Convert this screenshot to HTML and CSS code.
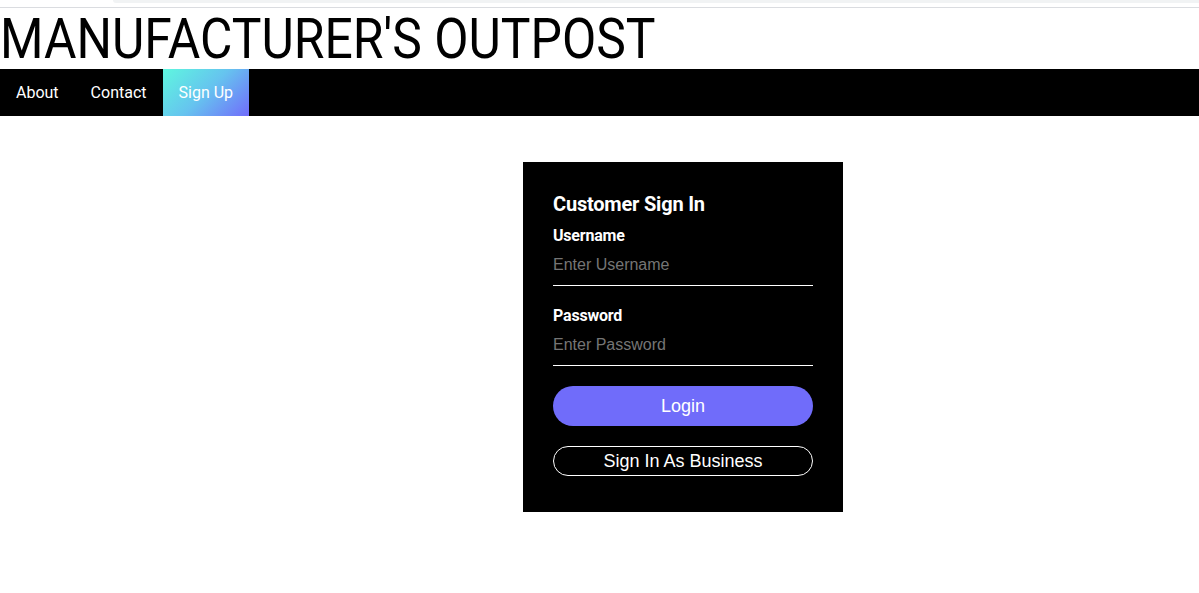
FILE: index.html
```html
<!DOCTYPE html>
<html lang="en">
<head>
<meta charset="utf-8">
<title>Manufacturer's Outpost</title>
<link rel="stylesheet" href="styles.css">
</head>
<body>
<div class="chrome"><div class="chrome-bar"></div></div>
<h1 class="site-title">MANUFACTURER'S OUTPOST</h1>
<nav class="nav">
  <a class="nav-link" href="#">About</a>
  <a class="nav-link" href="#">Contact</a>
  <a class="nav-link nav-link-active" href="#">Sign Up</a>
</nav>
<main class="main">
  <form class="card">
    <h2 class="card-title">Customer Sign In</h2>
    <label class="field-label" for="username">Username</label>
    <input class="field-input" id="username" type="text" placeholder="Enter Username">
    <label class="field-label field-label-gap" for="password">Password</label>
    <input class="field-input" id="password" type="password" placeholder="Enter Password">
    <button class="btn btn-primary" type="button">Login</button>
    <button class="btn btn-outline" type="button">Sign In As Business</button>
  </form>
</main>
</body>
</html>
```

FILE: styles.css
```css
html, body {
  margin: 0;
  padding: 0;
  background: #ffffff;
}

body {
  font-family: Roboto, "Liberation Sans", Arial, sans-serif;
  color: #000;
}

.chrome {
  height: 7px;
  border-bottom: 1px solid #dadce0;
  margin-bottom: 1px;
}

.chrome-bar {
  margin-left: 113px;
  height: 3px;
  background: #f1f3f4;
  border-bottom-left-radius: 6px;
}

.site-title {
  margin: 0;
  font-family: Roboto, sans-serif;
  font-weight: 400;
  font-size: 56px;
  line-height: 60px;
  white-space: nowrap;
  transform: scaleX(0.89);
  transform-origin: left center;
}

.nav {
  display: flex;
  background: #000;
  height: 47px;
}

.nav-link {
  display: block;
  padding: 0 16px;
  line-height: 47px;
  font-size: 16px;
  color: #fff;
  text-decoration: none;
}

.nav-link-active {
  background: linear-gradient(135deg, #5ef7df 0%, #66c3ef 50%, #716cfb 100%);
}

.main {
  display: flex;
  padding: 46px 0 0 523px;
}

.card {
  display: flex;
  flex-direction: column;
  width: 260px;
  padding: 30px 30px 36px;
  background: #000;
  color: #fff;
}

.card-title {
  margin: 0;
  font-size: 20px;
  line-height: 24px;
  font-weight: 700;
  letter-spacing: -0.2px;
}

.field-label {
  display: block;
  margin-top: 10px;
  font-size: 16px;
  line-height: 19px;
  font-weight: 700;
  letter-spacing: -0.2px;
}

.field-label-gap {
  margin-top: 20px;
}

.field-input {
  display: block;
  box-sizing: content-box;
  width: 260px;
  height: 40px;
  padding: 0;
  margin: 0;
  border: none;
  border-bottom: 1px solid #fff;
  background: transparent;
  color: #fff;
  font-family: "Liberation Sans", Arial, sans-serif;
  font-size: 16px;
  outline: none;
}

.field-input::placeholder {
  color: #757575;
}

.btn {
  display: block;
  width: 260px;
  margin: 20px 0 0;
  padding: 0;
  color: #fff;
  font-family: "Liberation Sans", Arial, sans-serif;
  font-size: 18px;
  line-height: 20px;
  cursor: pointer;
}

.btn-primary {
  height: 40px;
  border: none;
  border-radius: 20px;
  background: #706cfa;
  padding-bottom: 1px;
}

.btn-outline {
  height: 30px;
  border: 1px solid #fff;
  border-radius: 15px;
  background: #000;
  padding-bottom: 1px;
}
```
